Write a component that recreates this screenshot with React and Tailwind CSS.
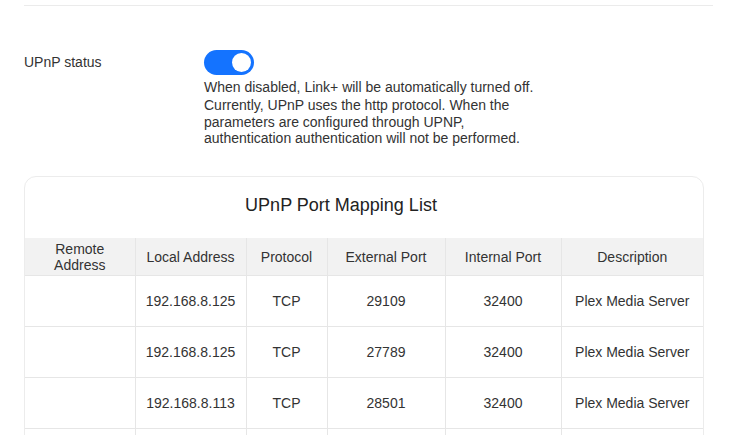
import { useState } from 'react'

const COLS = [
  { key: 'remote', label: 'Remote Address', w: 'w-[110px]' },
  { key: 'local', label: 'Local Address', w: 'w-[111px]' },
  { key: 'proto', label: 'Protocol', w: 'w-[81px]' },
  { key: 'ext', label: 'External Port', w: 'w-[118px]' },
  { key: 'int', label: 'Internal Port', w: 'w-[116px]' },
  { key: 'desc', label: 'Description', w: 'w-[142px]' },
]

const ROWS = [
  { remote: '', local: '192.168.8.125', proto: 'TCP', ext: '29109', int: '32400', desc: 'Plex Media Server' },
  { remote: '', local: '192.168.8.125', proto: 'TCP', ext: '27789', int: '32400', desc: 'Plex Media Server' },
  { remote: '', local: '192.168.8.113', proto: 'TCP', ext: '28501', int: '32400', desc: 'Plex Media Server' },
  { remote: '', local: '', proto: '', ext: '', int: '', desc: '' },
]

function Toggle({ on, onChange }) {
  return (
    <button
      onClick={() => onChange(!on)}
      className={`relative block w-[50px] h-[25px] rounded-full transition-colors ${on ? 'bg-[#1473ff]' : 'bg-[#c4c4c4]'}`}
    >
      <span
        className={`absolute top-[3px] w-[19px] h-[19px] rounded-full bg-white transition-all ${on ? 'left-[28px]' : 'left-[3px]'}`}
      />
    </button>
  )
}

export default function App() {
  const [upnp, setUpnp] = useState(true)

  return (
    <div className="w-[742px] h-[435px] overflow-hidden bg-white text-[#333] font-['Liberation_Sans',Arial,sans-serif] text-[14px]">
      <div className="pt-[5px] pl-[24px] pr-[29px]">
        <div className="border-t border-[#ebebeb]" />
      </div>

      {/* UPnP switch */}
      <div className="flex pl-[24px] pt-[44px]">
        <div className="w-[180px] pt-[4px] leading-[16px]">UPnP status</div>
        <div>
          <Toggle on={upnp} onChange={setUpnp} />
          <p className="mt-[4px] leading-[16px]">When disabled, Link+ will be automatically turned off.</p>
          <p className="mt-[2px] w-[330px] leading-[16.5px]">
            Currently, UPnP uses the http protocol. When the parameters are configured through UPNP,
            authentication authentication will not be performed.
          </p>
        </div>
      </div>

      {/* port mapping card */}
      <div className="ml-[24px] mt-[29px] w-[680px] border border-[#ececec] rounded-[12px] overflow-hidden">
        <div className="h-[61px] flex items-center justify-center pr-[46px] pb-[4px] text-[18px] text-[#222]">
          UPnP Port Mapping List
        </div>
        <table className="w-full table-fixed border-collapse text-center">
          <thead>
            <tr className="bg-[#f2f2f2] h-[38px]">
              {COLS.map(c => (
                <th
                  key={c.key}
                  className={`${c.w} font-normal leading-[16px] px-[8px] pt-[2px] border-x border-[#e6e6e6] first:border-l-0 last:border-r-0`}
                >
                  {c.label}
                </th>
              ))}
            </tr>
          </thead>
          <tbody>
            {ROWS.map((r, i) => (
              <tr key={i} className="h-[51px] border-t border-[#e6e6e6]">
                {COLS.map(c => (
                  <td key={c.key} className="border-x border-[#e6e6e6] first:border-l-0 last:border-r-0">
                    {r[c.key]}
                  </td>
                ))}
              </tr>
            ))}
          </tbody>
        </table>
      </div>
    </div>
  )
}
